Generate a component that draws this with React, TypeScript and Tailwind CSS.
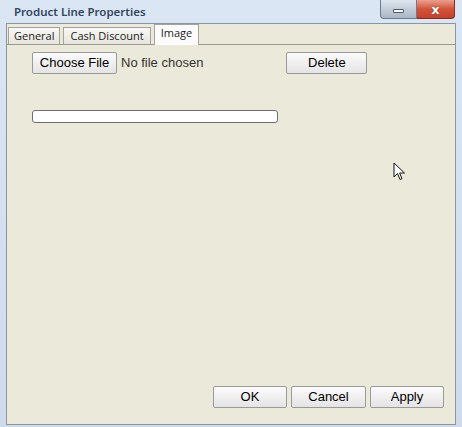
import React from 'react';

const btn =
  "h-[22px] border border-[#9a9a9a] rounded-[2px] bg-gradient-to-b from-[#fbfbfb] to-[#e4e4e4] text-[13px] text-black font-['Liberation_Sans',Arial,sans-serif] flex items-center justify-center";

const Cursor: React.FC = () => (
  <svg
    className="absolute left-[393px] top-[162px]"
    width="14"
    height="20"
    viewBox="0 0 14 20"
  >
    <path
      d="M1 1 L1 15 L4.5 11.5 L7 17.5 L9 16.6 L6.6 11 L11.5 11 Z"
      fill="#fff"
      stroke="#111"
      strokeWidth="1"
      strokeLinejoin="round"
    />
  </svg>
);

const App: React.FC = () => {
  return (
    <div className="relative w-[462px] h-[427px] bg-gradient-to-b from-[#dbe6f4] to-[#cfdbeb] flex flex-col overflow-hidden">
      {/* title bar */}
      <div className="h-[23px] flex items-start justify-between pl-[14px] pr-[7px] shrink-0">
        <span className="mt-[3px] text-[11.5px] font-semibold text-[#33475f] font-['Noto_Sans','Open_Sans',sans-serif]">
          Product Line Properties
        </span>
        <div className="flex">
          <div className="w-[37px] h-[19px] rounded-bl-[4px] border border-[#6b7b90] border-t-0 bg-gradient-to-b from-[#dfe6ef] to-[#a9b6c6] flex items-center justify-center">
            <div className="w-[11px] h-[4px] bg-white border border-[#4c5a6b] rounded-[1px] mt-[3px]" />
          </div>
          <div className="w-[38px] h-[19px] rounded-br-[4px] border border-[#8a2a1a] border-t-0 border-l-0 bg-gradient-to-b from-[#e9a08d] via-[#d2523a] to-[#c6402a] flex items-center justify-center">
            <span className="text-white font-bold text-[13px] leading-none font-['DejaVu_Sans',sans-serif] [text-shadow:0_0_1px_#3a0d05]">
              x
            </span>
          </div>
        </div>
      </div>

      {/* window body */}
      <div className="flex-1 flex flex-col ml-[6px] mr-[6px] mb-[2px] border border-[#8a96a5] bg-[#ebe9da]">
        {/* tab strip */}
        <div className="h-[20px] flex items-end pl-[1px] gap-[3px] shrink-0 font-['Open_Sans','Noto_Sans',sans-serif] text-[11px] text-[#1c1c1c]">
          <div className="h-[17px] px-[5px] flex items-center border border-b-0 border-[#a3a39a] bg-gradient-to-b from-[#f8f8f5] to-[#e6e5dc]">
            General
          </div>
          <div className="h-[17px] px-[6px] flex items-center border border-b-0 border-[#a3a39a] bg-gradient-to-b from-[#f8f8f5] to-[#e6e5dc]">
            Cash Discount
          </div>
          <div className="h-[21px] -mb-[1px] px-[6px] pb-[3px] flex items-center border border-b-0 border-[#a3a39a] bg-[#fcfcfc] relative z-10">
            Image
          </div>
        </div>

        {/* tab panel */}
        <div className="flex-1 flex flex-col border-t border-[#9a9a90] pl-[25px] pr-[11px] pt-[7px] pb-[16px]">
          <div className="flex items-center">
            <div className={`${btn} w-[85px]`}>Choose File</div>
            <span className="ml-[4px] text-[13px] text-[#333] font-['Liberation_Sans',Arial,sans-serif]">
              No file chosen
            </span>
            <div className={`${btn} w-[81px] ml-[83px]`}>Delete</div>
          </div>
          <div className="mt-[36px] w-[246px] h-[13px] rounded-[3px] border border-[#6e6e6e] bg-white" />

          <div className="flex-1" />

          <div className="flex justify-end gap-[4px]">
            <div className={`${btn} w-[74px]`}>OK</div>
            <div className={`${btn} w-[75px]`}>Cancel</div>
            <div className={`${btn} w-[74px]`}>Apply</div>
          </div>
        </div>
      </div>

      <Cursor />
    </div>
  );
};

export default App;
